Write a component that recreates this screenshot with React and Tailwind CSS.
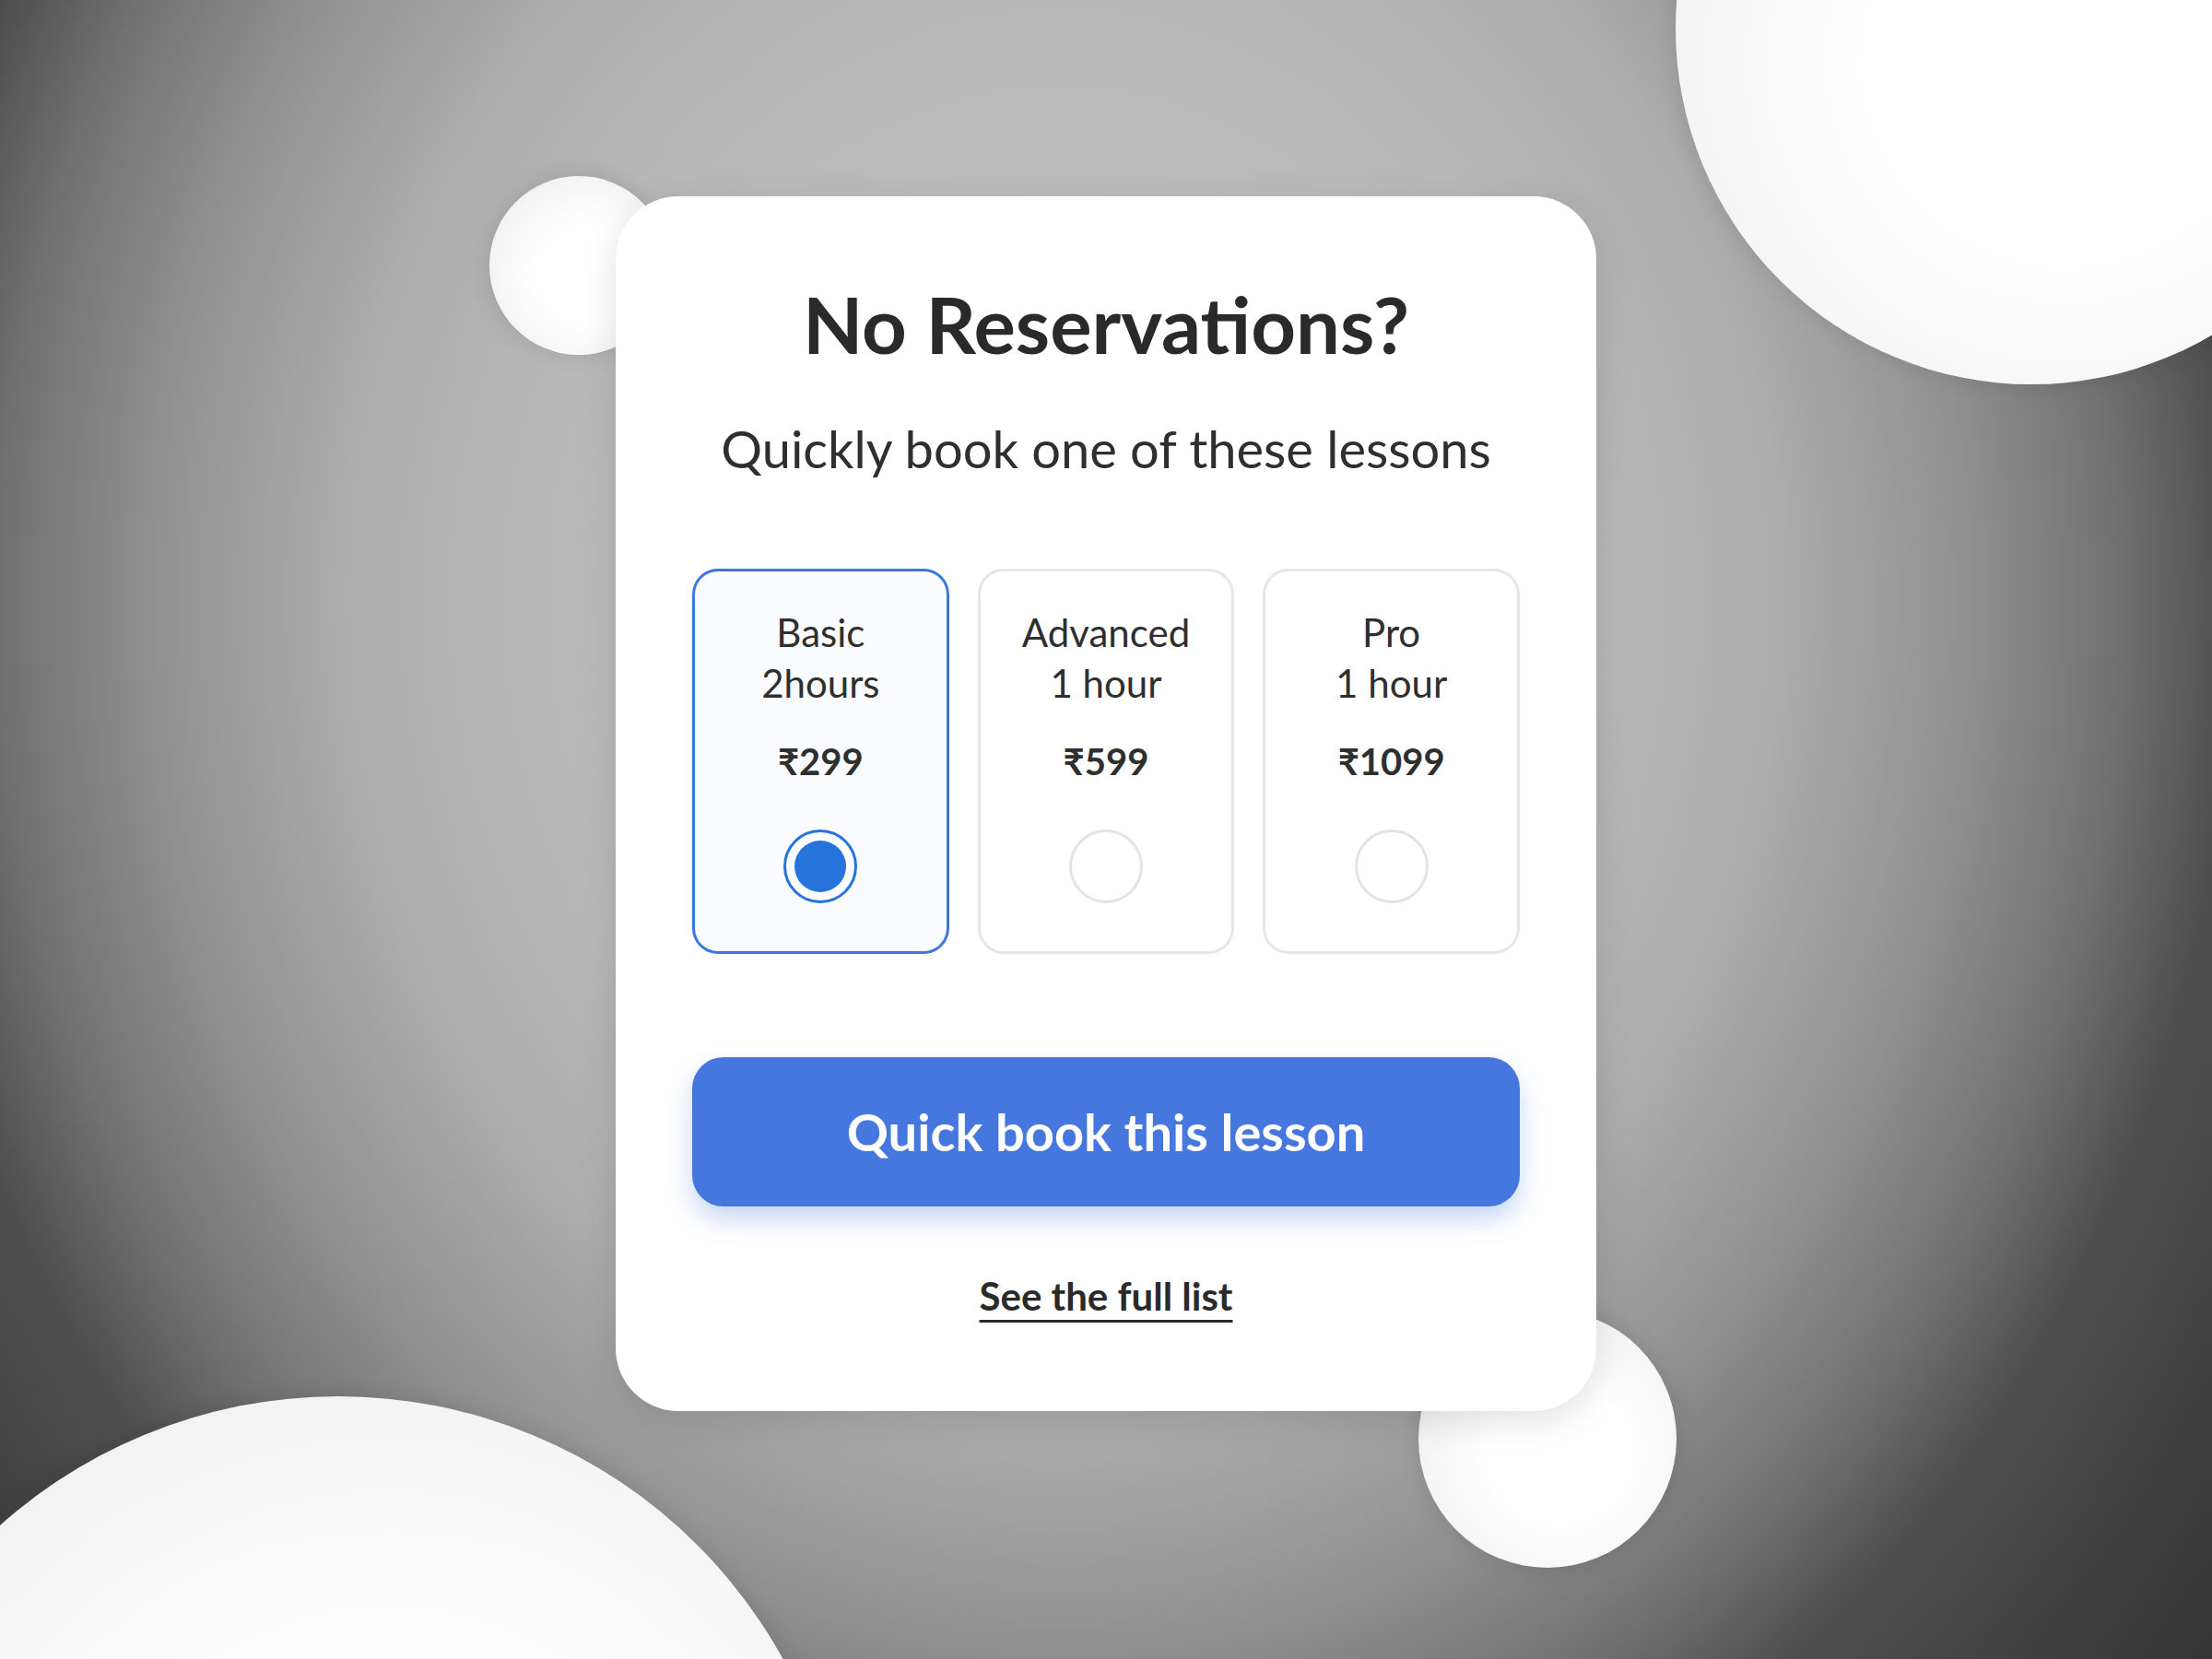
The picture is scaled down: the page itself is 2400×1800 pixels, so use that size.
import React, { useState } from 'react';

const lessons = [
  { id: 'basic', name: 'Basic', duration: '2hours', price: '₹299' },
  { id: 'advanced', name: 'Advanced', duration: '1 hour', price: '₹599' },
  { id: 'pro', name: 'Pro', duration: '1 hour', price: '₹1099' },
];

function Bubble({ className }) {
  return (
    <div
      className={`absolute rounded-full bg-[radial-gradient(circle_at_55%_55%,#ffffff_35%,#f4f4f4_70%,#dcdcdc_100%)] shadow-[0_0_24px_rgba(0,0,0,0.12)] ${className}`}
    />
  );
}

function LessonOption({ lesson, selected, onSelect }) {
  return (
    <button
      type="button"
      onClick={onSelect}
      className={`flex flex-col items-center rounded-[28px] border-[3px] pt-[39px] pb-[52px] ${
        selected ? 'border-[#3d75e1] bg-[#f9fbfe]' : 'border-[#e6e6e6] bg-white'
      }`}
    >
      <span className="text-[42px] leading-[55px] text-[#2f2f2f]">{lesson.name}</span>
      <span className="text-[42px] leading-[55px] text-[#2f2f2f]">{lesson.duration}</span>
      <span className="mt-[37px] text-[40px] font-bold leading-none text-[#2f2f2f]">{lesson.price}</span>
      <span
        className={`mt-[54px] flex h-[80px] w-[80px] items-center justify-center rounded-full border-[3px] ${
          selected ? 'border-[#2673dc]' : 'border-[#e3e3e3]'
        }`}
      >
        {selected && <span className="h-[56px] w-[56px] rounded-full bg-[#2673dc]" />}
      </span>
    </button>
  );
}

export default function App() {
  const [selected, setSelected] = useState('basic');

  return (
    <div className="relative flex h-[1800px] w-full justify-center overflow-hidden bg-[radial-gradient(ellipse_1300px_1500px_at_1150px_650px,#c4c4c4_0%,#b8b8b8_45%,#acacac_60%,#929292_75%,#727272_88%,#4e4e4e_98%,#323232_125%)] font-['Lato','Noto_Sans',sans-serif]">
      <Bubble className="left-[531px] top-[191px] h-[194px] w-[194px]" />
      <Bubble className="left-[1818px] top-[-355px] h-[772px] w-[772px]" />
      <Bubble className="left-[-184px] top-[1515px] h-[1102px] w-[1102px]" />
      <Bubble className="left-[1539px] top-[1421px] h-[280px] w-[280px]" />

      <div className="relative z-10 mt-[213px] flex h-fit w-[1064px] flex-col items-center rounded-[68px] bg-white px-[83px] pt-[96px] pb-[104px] shadow-[0_10px_40px_rgba(0,0,0,0.12)]">
        <h1 className="text-[85px] font-bold leading-none text-[#2a2a2a]">No Reservations?</h1>
        <p className="mt-[65px] text-[56px] leading-none text-[#2f2f2f]">Quickly book one of these lessons</p>

        <div className="mt-[102px] grid w-full grid-cols-3 gap-[31px]">
          {lessons.map((lesson) => (
            <LessonOption
              key={lesson.id}
              lesson={lesson}
              selected={selected === lesson.id}
              onSelect={() => setSelected(lesson.id)}
            />
          ))}
        </div>

        <button
          type="button"
          className="mt-[112px] h-[162px] w-full rounded-[34px] bg-[#4677df] text-[56px] font-bold text-white shadow-[0_14px_28px_rgba(70,119,223,0.3)]"
        >
          Quick book this lesson
        </button>

        <a
          href="#"
          className="mt-[76px] text-[42px] font-bold leading-none text-[#2a2a2a] underline decoration-[3px] underline-offset-[10px]"
        >
          See the full list
        </a>
      </div>
    </div>
  );
}
